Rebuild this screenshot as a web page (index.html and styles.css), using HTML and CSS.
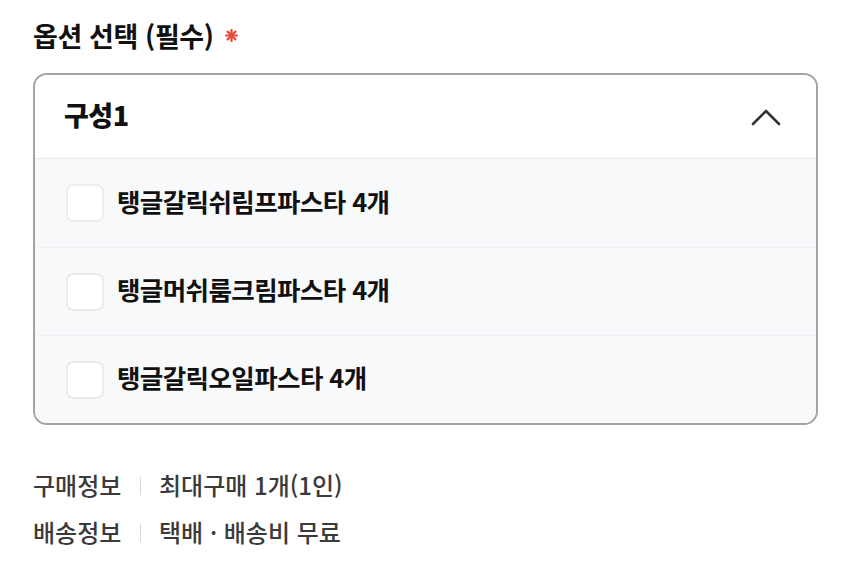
FILE: index.html
```html
<!DOCTYPE html>
<html lang="ko">
<head>
<meta charset="utf-8">
<link rel="stylesheet" href="styles.css">
</head>
<body>
<div class="page">
  <h2 class="title">옵션 선택 (필수)<svg class="req" width="13" height="13" viewBox="0 0 13 13"><g stroke="#ee4a3a" stroke-width="2.2" stroke-linecap="round"><path d="M6.5 1 V12"/><path d="M1 6.5 H12"/><path d="M2.6 2.6 L10.4 10.4"/><path d="M10.4 2.6 L2.6 10.4"/></g></svg></h2>
  <div class="box">
    <div class="head">
      <span class="head-label">구성1</span>
      <svg class="chev" width="32" height="20" viewBox="0 0 32 20"><path d="M3 17 L16 4 L29 17" fill="none" stroke="#333" stroke-width="2.6" stroke-linecap="round" stroke-linejoin="round"/></svg>
    </div>
    <ul class="list">
      <li class="item"><span class="cb"></span><span class="name">탱글갈릭쉬림프파스타 4개</span></li>
      <li class="item"><span class="cb"></span><span class="name">탱글머쉬룸크림파스타 4개</span></li>
      <li class="item"><span class="cb"></span><span class="name">탱글갈릭오일파스타 4개</span></li>
    </ul>
  </div>
  <dl class="info">
    <div class="row"><dt>구매정보</dt><dd>최대구매 1개(1인)</dd></div>
    <div class="row"><dt>배송정보</dt><dd>택배 · 배송비 무료</dd></div>
  </dl>
</div>
</body>
</html>
```

FILE: styles.css
```css
* { box-sizing: border-box; }
html, body { margin: 0; padding: 0; background: #fff; }
body {
  font-family: "Noto Sans CJK KR", "Noto Sans", sans-serif;
  color: #111;
}
.page { padding: 18px 33px 0 33px; }
.title {
  display: flex;
  align-items: center;
  margin: 0;
  font-size: 27px;
  font-weight: 700;
  line-height: 36px;
  letter-spacing: -0.4px;
  color: #111;
}
.req { margin-left: 11px; margin-top: -2px; }
.box {
  margin-top: 19px;
  width: 785px;
  border: 2px solid #a3a3a3;
  border-radius: 14px;
  overflow: hidden;
}
.head {
  height: 84px;
  display: flex;
  align-items: center;
  justify-content: space-between;
  padding: 0 34px 4px 29px;
  background: #fff;
  border-bottom: 1px solid #ececef;
}
.head-label { font-size: 27px; font-weight: 800; letter-spacing: -0.5px; }
.chev { display: block; margin-top: 4px; }
.list { list-style: none; margin: 0; padding: 0; background: #f8f9fb; }
.item {
  height: 88px;
  display: flex;
  align-items: center;
  padding-left: 31px;
  gap: 13px;
  border-top: 1px solid #f0f1f4;
}
.item:first-child { border-top: 0; }
.cb {
  width: 38px; height: 38px;
  border: 2px solid #ececee;
  border-radius: 7px;
  background: #fff;
}
.name {
  font-size: 25.5px; font-weight: 700; letter-spacing: -0.6px; color: #111;
  position: relative; top: -3px;
}
.info { margin: 36px 0 0 0; }
.row { display: flex; align-items: center; height: 47px; font-size: 24px; font-weight: 500; color: #3a3a3a; line-height: 30px; }
.row dt { width: 108px; position: relative; }
.row dt::after {
  content: ""; position: absolute; right: 0; top: 50%;
  width: 1px; height: 18px; margin-top: -8px; background: #d8d8d8;
}
.row dd { margin: 0 0 0 18px; }
```
